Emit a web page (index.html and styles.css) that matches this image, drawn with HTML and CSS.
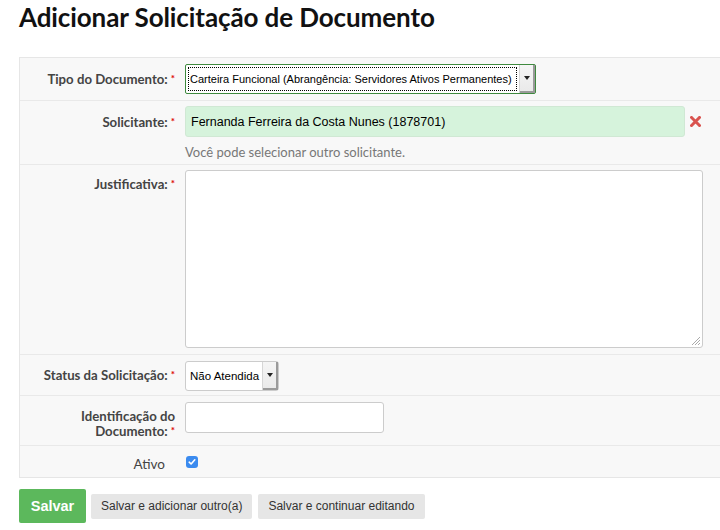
FILE: index.html
```html
<!DOCTYPE html>
<html lang="pt-BR">
<head>
<meta charset="utf-8">
<title>Adicionar Solicitação de Documento</title>
<link rel="stylesheet" href="styles.css">
</head>
<body>
<div class="page">
  <h1 class="title">Adicionar Solicitação de Documento</h1>
  <div class="form-box">
    <div class="row row-1">
      <div class="label">Tipo do Documento:<span class="req">*</span></div>
      <div class="field">
        <div class="select select-focus">
          <span class="select-text"><span class="focus-ring">Carteira Funcional (Abrangência: Servidores Ativos Permanentes)</span></span>
          <span class="select-arrow"><span class="caret"></span></span>
        </div>
      </div>
    </div>
    <div class="row row-2">
      <div class="label">Solicitante:<span class="req">*</span></div>
      <div class="field">
        <div class="input-line">
          <div class="input input-green">Fernanda Ferreira da Costa Nunes (1878701)</div>
          <svg class="remove" width="11" height="11" viewBox="0 0 11 11"><path d="M1.5 1.5 L9.5 9.5 M9.5 1.5 L1.5 9.5" stroke="#d9534f" stroke-width="3" stroke-linecap="square"/></svg>
        </div>
        <div class="help">Você pode selecionar outro solicitante.</div>
      </div>
    </div>
    <div class="row row-3">
      <div class="label">Justificativa:<span class="req">*</span></div>
      <div class="field">
        <div class="textarea">
          <svg class="grip" width="11" height="11" viewBox="0 0 11 11"><path d="M10 2 L2 10 M10 5 L5 10 M10 8 L8 10" stroke="#aaa" stroke-width="1"/></svg>
        </div>
      </div>
    </div>
    <div class="row row-4">
      <div class="label">Status da Solicitação:<span class="req">*</span></div>
      <div class="field">
        <div class="select select-small">
          <span class="select-text">Não Atendida</span>
          <span class="select-arrow"><span class="caret"></span></span>
        </div>
      </div>
    </div>
    <div class="row row-5">
      <div class="label">Identificação do<br>Documento:<span class="req">*</span></div>
      <div class="field">
        <div class="input input-short"></div>
      </div>
    </div>
    <div class="row row-6">
      <div class="label label-plain">Ativo</div>
      <div class="field">
        <span class="checkbox"><svg width="12" height="12" viewBox="0 0 12 12"><path d="M3.2 6.2 L5.1 8 L8.8 3.8" fill="none" stroke="#fff" stroke-width="1.6" stroke-linecap="round" stroke-linejoin="round"/></svg></span>
      </div>
    </div>
  </div>
  <div class="actions">
    <button class="btn btn-primary">Salvar</button>
    <button class="btn btn-default">Salvar e adicionar outro(a)</button>
    <button class="btn btn-default">Salvar e continuar editando</button>
  </div>
</div>
</body>
</html>
```

FILE: styles.css
```css
* { box-sizing: border-box; }
html, body { margin: 0; padding: 0; background: #fff; overflow: hidden; }
body { font-family: Lato, "Open Sans", sans-serif; color: #333; }
.page { padding-left: 19px; width: 760px; }

.title {
  margin: 0 0 23px 0;
  font-family: Lato, sans-serif;
  font-weight: 700;
  font-size: 26px;
  line-height: 34px;
  color: #111;
  letter-spacing: -0.1px;
}

.form-box {
  background: #f8f8f8;
  border: 1px solid #e6e6e6;
  border-right: none;
  width: 741px;
}

.row {
  display: grid;
  grid-template-columns: 156px 1fr;
  column-gap: 9px;
  border-top: 1px solid #e9e9e9;
  padding: 6px 0 6px 0;
}
.row-1 { border-top: none; padding: 6px 0 6px 0; }
.row-2 { padding: 5px 0 4px 0; }
.row-3 { padding: 5px 0 6px 0; }
.row-4 { padding: 6px 0 4px 0; }
.row-5 { padding: 6px 0 6px 0; }
.row-6 { padding: 5px 0 5px 0; }

.label {
  text-align: right;
  font-weight: 700;
  font-size: 13.2px;
  line-height: 16px;
  color: #444;
  padding-top: 7px;
  padding-right: 1px;
}
.row-2 .label { padding-top: 8px; }
.row-3 .label { padding-top: 6px; }
.row-4 .label { padding-top: 6px; }
.row-5 .label { padding-top: 7px; line-height: 15px; }
.label-plain { font-weight: 400; padding-top: 5px; padding-right: 11px; font-size: 13.5px; }
.req {
  color: #d00;
  font-size: 10px;
  line-height: 10px;
  margin-left: 3px;
  position: relative;
  top: -2px;
  font-weight: 700;
}

.field { font-family: "Liberation Sans", Arial, sans-serif; }

.select {
  display: inline-flex;
  align-items: stretch;
  height: 30px;
  background: #fff;
  border: 1px solid #ccc;
  border-radius: 3px;
  font-size: 11px;
  color: #000;
}
.select-focus {
  width: 351px;
  border-color: #3f8a3f;
  border-radius: 2px;
}
.select-text {
  flex: 1;
  display: flex;
  align-items: center;
  padding: 3px;
  white-space: nowrap;
  overflow: hidden;
}
.focus-ring {
  display: flex;
  align-items: center;
  height: 100%;
  width: 100%;
  padding-left: 1px;
  outline: 1px dotted #000;
}
.select-arrow {
  width: 16px;
  border-left: 1px solid #d6d6d6;
  background: linear-gradient(#f5f5f5, #e9e9e9);
  box-shadow: inset -2px -2px 0 #9a9a9a;
  display: flex;
  align-items: center;
  justify-content: center;
  padding-right: 2px;
  padding-bottom: 2px;
}
.caret {
  width: 0; height: 0;
  border-left: 3px solid transparent;
  border-right: 3px solid transparent;
  border-top: 4px solid #222;
}
.select-small {
  width: 94px;
  font-size: 11.5px;
}
.select-small .select-text { padding-left: 4px; }

.input-line { display: flex; align-items: center; }
.input {
  height: 31px;
  border: 1px solid #ccc;
  border-radius: 3px;
  background: #fff;
  font-size: 12.5px;
  color: #000;
  padding: 0 5px;
  display: flex;
  align-items: center;
}
.input-green {
  width: 500px;
  background: #d6f3dc;
  border-color: #d0e8d4;
}
.remove { margin-left: 5px; }
.input-short { width: 199px; }

.help {
  font-family: Lato, sans-serif;
  font-size: 13px;
  color: #777;
  line-height: 16px;
  margin-top: 7px;
}

.textarea {
  width: 518px;
  height: 178px;
  background: #fff;
  border: 1px solid #ccc;
  border-radius: 3px;
  display: flex;
  justify-content: flex-end;
  align-items: flex-end;
}
.grip { margin: 0 1px 1px 0; }

.checkbox {
  display: inline-flex;
  width: 12px;
  height: 12px;
  margin-left: 1px;
  margin-top: 5px;
  background: #3b8bef;
  border-radius: 3px;
}

.actions {
  display: flex;
  align-items: center;
  gap: 5px;
  margin-top: 11px;
}
.btn {
  font-family: "Liberation Sans", Arial, sans-serif;
  border: none;
  border-radius: 2px;
  cursor: pointer;
  margin: 0;
}
.btn-primary {
  background: #5cb85c;
  color: #fff;
  font-weight: 700;
  font-size: 14.5px;
  height: 34px;
  width: 67px;
  padding: 0;
}
.btn-default {
  background: #e6e6e6;
  color: #333;
  font-size: 12px;
  height: 25px;
  padding: 0 10px;
}
.btn-default + .btn-default { margin-left: 1px; }
```
